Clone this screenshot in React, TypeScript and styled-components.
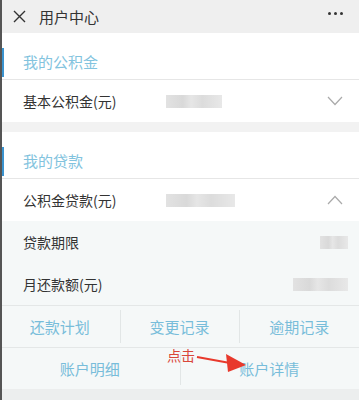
import React from "react";
import styled, { createGlobalStyle } from "styled-components";

const Global = createGlobalStyle`
  html, body { margin: 0; padding: 0; background: #fff; }
  body { font-family: "Noto Sans CJK SC", "Noto Sans", sans-serif; }
  * { box-sizing: border-box; }
`;

const Page = styled.div`
  width: 359px;
  height: 400px;
  position: relative;
  overflow: hidden;
  background: #eceeee;
  border-left: 2px solid #555;
`;

const Header = styled.div`
  height: 33px;
  background: #efefef;
  display: flex;
  align-items: center;
  padding: 0 0 0 11px;
  color: #333;
`;

const Title = styled.div`
  font-size: 15px;
  margin-left: 13px;
  flex: 1;
`;

const Dots = styled.div`
  display: flex;
  gap: 3px;
  margin-right: 16px;
  margin-top: -7px;
  span {
    width: 3px;
    height: 3px;
    border-radius: 50%;
    background: #333;
  }
`;

const SectionTitle = styled.div`
  height: 47px;
  padding-top: 10px;
  background: #fff;
  border-bottom: 1px solid #e6e6e6;
  display: flex;
  align-items: center;
  position: relative;
  font-size: 15px;
  color: #82c3de;
  padding-left: 21px;
  &::before {
    content: "";
    position: absolute;
    left: -2px;
    top: 15px;
    width: 4px;
    height: 29px;
    background: #3a93cf;
  }
`;

const Row = styled.div<{ $bg?: string }>`
  height: 42px;
  display: flex;
  align-items: center;
  padding-left: 21px;
  background: ${(p) => p.$bg || "#fff"};
  font-size: 14px;
  color: #333;
  position: relative;
`;

const Label = styled.div`
  width: 143px;
`;

const Blur = styled.div<{ $w: number; $h: number; $right?: boolean }>`
  width: ${(p) => p.$w}px;
  height: ${(p) => p.$h}px;
  margin-left: ${(p) => (p.$right ? "auto" : "0")};
  margin-right: ${(p) => (p.$right ? "11px" : "0")};
  background: linear-gradient(
    90deg,
    #e2e2e2 0%,
    #d9d9d9 30%,
    #e6e6e6 45%,
    #dcdcdc 65%,
    #e8e8e8 100%
  );
  filter: blur(0.6px);
`;

const Chevron = styled.svg`
  position: absolute;
  right: 16px;
  top: 50%;
  transform: translateY(-50%);
`;

const Band = styled.div`
  height: 10px;
  background: #f2f2f2;
`;

const Detail = styled.div`
  background: #f5f8f8;
`;

const ButtonRow = styled.div<{ $cols: number }>`
  display: grid;
  grid-template-columns: repeat(${(p) => p.$cols}, 1fr);
  height: 42px;
  border-top: 1px solid #e4e7e7;
  background: #f5f8f8;
  margin-left: -2px;
`;

const Btn = styled.div<{ $first?: boolean }>`
  display: flex;
  align-items: center;
  justify-content: center;
  font-size: 15px;
  color: #78bdda;
  position: relative;
  &::before {
    content: "";
    display: ${(p) => (p.$first ? "none" : "block")};
    position: absolute;
    left: 0;
    top: 4px;
    bottom: 4px;
    width: 1px;
    background: #e2e6e6;
  }
`;

const Note = styled.div`
  position: absolute;
  left: 165px;
  top: 345px;
  font-size: 14px;
  color: #d9473a;
`;

const Arrow = styled.svg`
  position: absolute;
  left: 190px;
  top: 350px;
`;

export default function App() {
  return (
    <>
      <Global />
      <Page>
        <Header>
          <svg width="13" height="13" viewBox="0 0 13 13">
            <path d="M1 1 L12 12 M12 1 L1 12" stroke="#333" strokeWidth="1.4" fill="none" />
          </svg>
          <Title>用户中心</Title>
          <Dots>
            <span />
            <span />
            <span />
          </Dots>
        </Header>
        <SectionTitle>我的公积金</SectionTitle>
        <Row>
          <Label>基本公积金(元)</Label>
          <Blur $w={56} $h={13} />
          <Chevron width="16" height="10" viewBox="0 0 16 10">
            <path d="M1 1 L8 8.5 L15 1" stroke="#aaa" strokeWidth="1.2" fill="none" />
          </Chevron>
        </Row>
        <Band />
        <SectionTitle>我的贷款</SectionTitle>
        <Row>
          <Label>公积金贷款(元)</Label>
          <Blur $w={69} $h={13} />
          <Chevron width="16" height="10" viewBox="0 0 16 10">
            <path d="M1 9 L8 1.5 L15 9" stroke="#aaa" strokeWidth="1.2" fill="none" />
          </Chevron>
        </Row>
        <Detail>
          <Row $bg="#f5f8f8">
            <Label>贷款期限</Label>
            <Blur $w={28} $h={13} $right />
          </Row>
          <Row $bg="#f5f8f8">
            <Label>月还款额(元)</Label>
            <Blur $w={55} $h={13} $right />
          </Row>
          <ButtonRow $cols={3}>
            <Btn $first>还款计划</Btn>
            <Btn>变更记录</Btn>
            <Btn>逾期记录</Btn>
          </ButtonRow>
          <ButtonRow $cols={2}>
            <Btn $first>账户明细</Btn>
            <Btn>账户详情</Btn>
          </ButtonRow>
        </Detail>
        <Note>点击</Note>
        <Arrow width="60" height="25" viewBox="0 0 60 25">
          <path d="M5 7 L38 13" stroke="#e8392c" strokeWidth="2" fill="none" />
          <path d="M34 4 L54 15 L36 22 Z" fill="#e8392c" />
        </Arrow>
      </Page>
    </>
  );
}
